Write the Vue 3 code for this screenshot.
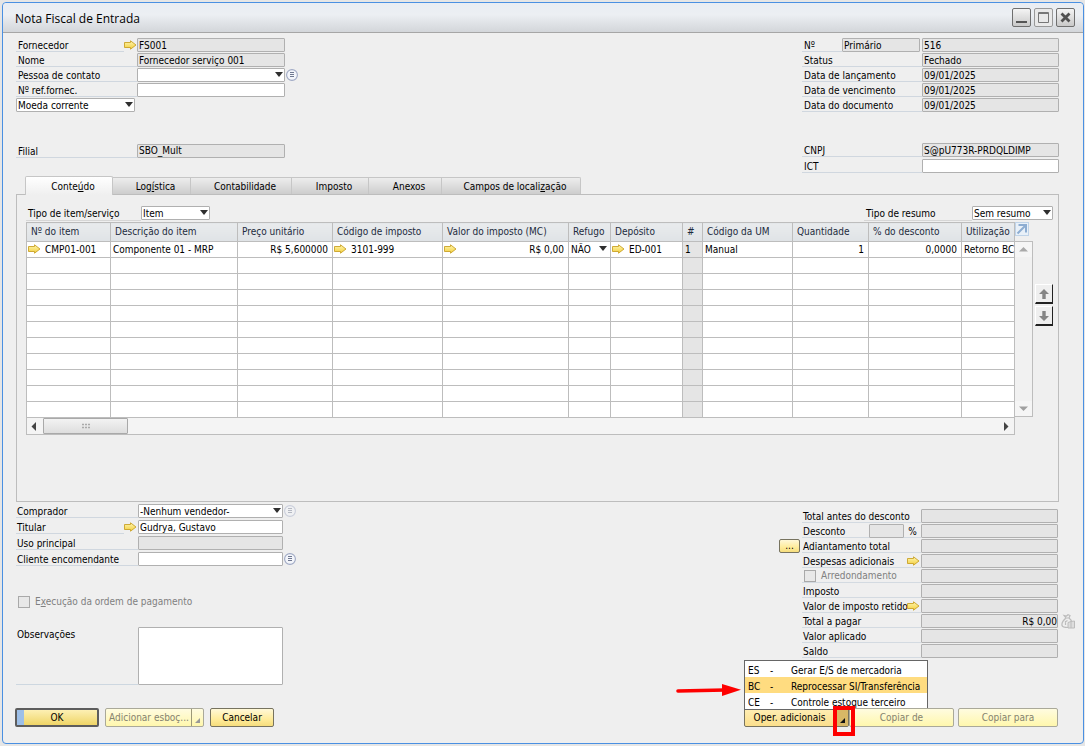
<script setup>
import { ref } from 'vue'

const tabs = [
  { before: 'Conte', key: 'ú', after: 'do', width: 'w-content' },
  { before: 'Log', key: 'í', after: 'stica', width: 'w-logistics' },
  { before: 'Contabilidade', key: '', after: '', width: 'w-accounting' },
  { before: 'Imposto', key: '', after: '', width: 'w-tax' },
  { before: 'Anexos', key: '', after: '', width: 'w-files' },
  { before: 'Campos de locali', key: 'z', after: 'ação', width: 'w-fields' },
]
const activeTab = ref(0)

const dates = [
  { id: 'status', label: 'Status', value: 'Fechado' },
  { id: 'posting', label: 'Data de lançamento', value: '09/01/2025' },
  { id: 'due', label: 'Data de vencimento', value: '09/01/2025' },
  { id: 'document', label: 'Data do documento', value: '09/01/2025' },
]

const columns = [
  { title: 'Nº do item', cls: 'c-item' },
  { title: 'Descrição do item', cls: 'c-desc' },
  { title: 'Preço unitário', cls: 'c-price' },
  { title: 'Código de imposto', cls: 'c-code' },
  { title: 'Valor do imposto (MC)', cls: 'c-value' },
  { title: 'Refugo', cls: 'c-scrap' },
  { title: 'Depósito', cls: 'c-store' },
  { title: '#', cls: 'c-num' },
  { title: 'Código da UM', cls: 'c-um' },
  { title: 'Quantidade', cls: 'c-qty' },
  { title: '% do desconto', cls: 'c-disc' },
  { title: 'Utilização', cls: 'c-use' },
]
const item = [
  { text: 'CMP01-001', arrow: true },
  { text: 'Componente 01 - MRP' },
  { text: 'R$ 5,600000', right: true },
  { text: '3101-999', arrow: true },
  { text: 'R$ 0,00', arrow: true, right: true },
  { text: 'NÃO', drop: true },
  { text: 'ED-001', arrow: true },
  { text: '1' },
  { text: 'Manual' },
  { text: '1', right: true },
  { text: '0,0000', right: true },
  { text: 'Retorno BC' },
]

const totals = [
  { id: 'before', label: 'Total antes do desconto' },
  { id: 'discount', label: 'Desconto', percent: true },
  { id: 'advance', label: 'Adiantamento total', more: true },
  { id: 'freight', label: 'Despesas adicionais', arrow: true },
  { id: 'rounding', label: 'Arredondamento', check: true },
  { id: 'tax', label: 'Imposto' },
  { id: 'withheld', label: 'Valor de imposto retido', arrow: true },
  { id: 'due-total', label: 'Total a pagar', value: 'R$ 0,00', bag: true },
  { id: 'applied', label: 'Valor aplicado' },
  { id: 'balance', label: 'Saldo' },
]

const operations = [
  { code: 'ES', name: 'Gerar E/S de mercadoria' },
  { code: 'BC', name: 'Reprocessar SI/Transferência' },
  { code: 'CE', name: 'Controle estoque terceiro' },
]
const highlighted = ref(1)
</script>

<template>
  <svg class="defs" aria-hidden="true">
    <defs>
      <linearGradient id="gold" x1="0" y1="0" x2="0" y2="1">
        <stop offset="0" stop-color="#fff6b0" />
        <stop offset="1" stop-color="#f3cf3c" />
      </linearGradient>
      <symbol id="link-arrow" viewBox="0 0 13 10">
        <path d="M.5 2.5H6.5V.8L12 5 6.5 9.2V7.5H.5Z" fill="url(#gold)" stroke="#c9a227" stroke-width=".9" stroke-linejoin="round" />
      </symbol>
      <symbol id="list-dot" viewBox="0 0 12 12">
        <circle cx="6" cy="6" r="5.4" fill="#f3f5fa" stroke="#9fa9c4" stroke-width="1.1" />
        <path d="M4 3.5H8M4 5.5H8M4 7.5H8" stroke="#6f7890" />
      </symbol>
    </defs>
  </svg>

  <div class="desktop">
    <section class="window">
      <header class="titlebar">
        <h1>Nota Fiscal de Entrada</h1>
        <div class="controls">
          <button type="button" aria-label="Minimizar"><svg viewBox="0 0 17 17"><path d="M3 13H14" stroke="#555" stroke-width="2" /></svg></button>
          <button type="button" class="light" aria-label="Maximizar"><svg viewBox="0 0 17 17"><path d="M3.500 3.500H13.500V13.500H3.500ZM3 4.500H14" fill="none" stroke="#777" /></svg></button>
          <button type="button" aria-label="Fechar"><svg viewBox="0 0 17 17"><path d="M4.500 4.500L12.500 12.500M12.500 4.500L4.500 12.500" stroke="#505050" stroke-width="2.800" /></svg></button>
        </div>
      </header>

      <main>
        <div class="head">
          <div class="supplier">
            <div class="row">
              <label for="supplier">Fornecedor</label>
              <svg class="arrow"><use href="#link-arrow" /></svg>
              <input id="supplier" class="field ro" value="FS001" readonly />
            </div>
            <div class="row">
              <label for="name">Nome</label>
              <input id="name" class="field ro" value="Fornecedor serviço 001" readonly />
            </div>
            <div class="row">
              <label for="contact">Pessoa de contato</label>
              <span class="drop"><select id="contact"><option></option></select></span>
              <svg class="dot"><use href="#list-dot" /></svg>
            </div>
            <div class="row">
              <label for="ref">Nº ref.fornec.</label>
              <input id="ref" class="field" />
            </div>
            <div class="row">
              <span class="drop currency"><select aria-label="Moeda"><option>Moeda corrente</option></select></span>
            </div>
            <div class="row branch">
              <label for="branch">Filial</label>
              <input id="branch" class="field ro" value="SBO_Mult" readonly />
            </div>
          </div>

          <div class="document">
            <div class="row">
              <label for="number" class="short">Nº</label>
              <input class="field ro series" value="Primário" aria-label="Série" readonly />
              <input id="number" class="field ro" value="516" readonly />
            </div>
            <div v-for="d in dates" :key="d.id" class="row">
              <label :for="d.id">{{ d.label }}</label>
              <input :id="d.id" class="field ro" :value="d.value" readonly />
            </div>
            <div class="row cnpj">
              <label for="cnpj">CNPJ</label>
              <input id="cnpj" class="field ro" value="S@pU773R-PRDQLDIMP" readonly />
            </div>
            <div class="row">
              <label for="ict">ICT</label>
              <input id="ict" class="field" />
            </div>
          </div>
        </div>

        <nav class="tabs">
          <button v-for="(t, i) in tabs" :key="i" type="button" :class="[t.width, { active: i === activeTab }]" @click="activeTab = i">{{ t.before }}<u v-if="t.key">{{ t.key }}</u>{{ t.after }}</button>
        </nav>

        <div class="panel">
          <div class="filters">
            <label for="kind">Tipo de item/serviço</label>
            <span class="drop kind"><select id="kind"><option>Item</option></select></span>
            <span class="spacer"></span>
            <label for="summary">Tipo de resumo</label>
            <span class="drop summary"><select id="summary"><option>Sem resumo</option></select></span>
          </div>

          <div class="matrix">
            <div class="sheet">
              <table>
                <thead>
                  <tr><th v-for="c in columns" :key="c.title" :class="c.cls">{{ c.title }}</th></tr>
                </thead>
                <tbody>
                  <tr>
                    <td v-for="(c, i) in item" :key="i" :class="{ shade: i === 7 }">
                      <div class="cell">
                        <svg v-if="c.arrow" class="arrow"><use href="#link-arrow" /></svg>
                        <span :class="{ right: c.right }">{{ c.text }}</span>
                        <i v-if="c.drop" class="tri"></i>
                      </div>
                    </td>
                  </tr>
                  <tr v-for="r in 10" :key="r">
                    <td v-for="i in 12" :key="i" :class="{ shade: i === 8 }"></td>
                  </tr>
                </tbody>
              </table>
              <div class="hscroll">
                <button type="button" aria-label="Rolar para a esquerda"><svg viewBox="0 0 14 15"><path d="M9 3V12L4.500 7.500Z" fill="#444" /></svg></button>
                <div class="thumb"><svg viewBox="0 0 10 6"><path d="M1 1.500H9M1 4.500H9" stroke="#aaa" stroke-width="1.400" stroke-dasharray="2 1" /></svg></div>
                <button type="button" aria-label="Rolar para a direita"><svg viewBox="0 0 14 15"><path d="M6 3V12L10.500 7.500Z" fill="#444" /></svg></button>
              </div>
            </div>
            <div class="side">
              <button type="button" class="expand" aria-label="Expandir"><svg viewBox="0 0 12 12"><path d="M1.500 10.500L9 3M2.500 2H10V9.500" fill="none" stroke="#8dadd2" stroke-width="2" /></svg></button>
              <div class="vscroll">
                <button type="button" aria-label="Rolar para cima"><svg viewBox="0 0 15 15"><path d="M3 9.500H12L7.500 5Z" fill="#a9a9a9" /></svg></button>
                <button type="button" aria-label="Rolar para baixo"><svg viewBox="0 0 15 15"><path d="M3 5.500H12L7.500 10Z" fill="#a0a0a0" /></svg></button>
              </div>
            </div>
            <div class="movers">
              <button type="button" aria-label="Mover para cima"><svg viewBox="0 0 12 12"><path d="M6 1L11 6H7.700V11H4.300V6H1Z" fill="#858585" /></svg></button>
              <button type="button" aria-label="Mover para baixo"><svg viewBox="0 0 12 12"><path d="M6 11L11 6H7.700V1H4.300V6H1Z" fill="#858585" /></svg></button>
            </div>
          </div>
        </div>

        <div class="foot">
          <div class="people">
            <div class="row">
              <label for="buyer">Comprador</label>
              <span class="drop"><select id="buyer"><option>-Nenhum vendedor-</option></select></span>
              <svg class="dot faded"><use href="#list-dot" /></svg>
            </div>
            <div class="row">
              <label for="owner">Titular</label>
              <svg class="arrow"><use href="#link-arrow" /></svg>
              <input id="owner" class="field" value="Gudrya, Gustavo" />
            </div>
            <div class="row">
              <label for="usage">Uso principal</label>
              <input id="usage" class="field ro" readonly />
            </div>
            <div class="row">
              <label for="client">Cliente encomendante</label>
              <input id="client" class="field" />
              <svg class="dot"><use href="#list-dot" /></svg>
            </div>
            <div class="check payment">
              <input id="payment" type="checkbox" disabled />
              <label for="payment">E<u>x</u>ecução da ordem de pagamento</label>
            </div>
            <div class="remarks">
              <label for="remarks">Observações</label>
              <textarea id="remarks"></textarea>
            </div>
          </div>

          <div class="totals">
            <div v-for="t in totals" :key="t.id" class="total">
              <span><button v-if="t.more" type="button" class="gold more">...</button></span>
              <div v-if="t.check" class="check caption">
                <input :id="'check-' + t.id" type="checkbox" disabled />
                <label :for="'check-' + t.id">{{ t.label }}</label>
              </div>
              <div v-else class="caption">
                <label :for="t.id">{{ t.label }}</label>
                <template v-if="t.percent">
                  <input class="field ro percent" aria-label="Percentual de desconto" readonly />
                  <span class="sign">%</span>
                </template>
                <svg v-if="t.arrow" class="arrow"><use href="#link-arrow" /></svg>
              </div>
              <input :id="t.id" class="field ro amount" :value="t.value" :aria-label="t.label" readonly />
              <svg v-if="t.bag" class="bag" viewBox="0 0 14 15">
                <path d="M5 4C1.500 7 .5 9 1 11.500 1.500 13.500 4 13.500 7 13.500M5 4L3 1.500 5.500 2 7 .7 9 1.500 8 4C10 5.500 10.500 6.500 10.500 8M5 4H8M4.500 7V11M6.500 6.500L4 8" fill="none" stroke="#bcbcbc" stroke-width="1.200" />
                <path d="M7 8.500L10 7.500 13.500 7V14H7ZM10 7.500V14" fill="#ddd" stroke="#bcbcbc" />
              </svg>
            </div>
          </div>
        </div>

        <footer>
          <button type="button" class="gold ok">OK</button>
          <button type="button" class="gold draft" disabled>Adicionar esboç...<i></i></button>
          <button type="button" class="gold cancel">Cancelar</button>
          <span class="spacer"></span>
          <div class="ops">
            <button type="button" class="gold op">Oper. adicionais<i></i></button>
            <ul class="menu">
              <li v-for="(o, i) in operations" :key="o.code">
                <button type="button" :class="{ on: i === highlighted }" @mouseenter="highlighted = i">
                  <span>{{ o.code }}</span><span>-</span><span>{{ o.name }}</span>
                </button>
              </li>
            </ul>
            <span class="marker"></span>
            <svg class="pointer" viewBox="0 0 67 14">
              <path d="M3 8L50 7" stroke="#fe0000" stroke-width="3.600" stroke-linecap="round" />
              <path d="M47 1L66 6.700 47 13Z" fill="#fe0000" />
            </svg>
          </div>
          <button type="button" class="gold copy-from" disabled>Copiar de</button>
          <button type="button" class="gold copy-to" disabled>Copiar para</button>
        </footer>
      </main>
    </section>
  </div>
</template>

<style>
body {
  margin: 0;
  background: #e6e6e6;
}
</style>

<style scoped>
* {
  box-sizing: border-box;
}
.defs {
  position: absolute;
  width: 0;
  height: 0;
}
.desktop {
  min-height: 100vh;
  display: flex;
  padding: 2px 1px 2px 2px;
  font: 10px/12px "DejaVu Sans Condensed", "DejaVu Sans", sans-serif;
  color: #000;
}
.window {
  flex: 1;
  min-width: 0;
  border: 1px solid #4a90e2;
  border-radius: 4px;
  background: #efefef;
}
button,
input,
select,
textarea {
  font: inherit;
  color: inherit;
  margin: 0;
  padding: 0;
  border: 0;
  border-radius: 0;
  background: none;
}
svg {
  display: block;
  flex: none;
}
.titlebar {
  height: 30px;
  display: flex;
  align-items: center;
  justify-content: space-between;
  padding: 0 8px 0 12px;
  border-bottom: 1px solid #a6a6a6;
  border-radius: 4px 4px 0 0;
  background: linear-gradient(#e9edf3, #eceff3 40%, #d3d6da);
}
h1 {
  margin: 2px 0 0;
  font: 12px/16px "Open Sans", "Noto Sans", sans-serif;
}
.controls {
  display: flex;
  gap: 3px;
}
.controls button {
  width: 19px;
  height: 19px;
  border: 1px solid #6f6f6f;
  border-radius: 2px;
  background: linear-gradient(#f4f4f4, #c9c9c9);
}
.controls .light {
  border-color: #999;
  background: #e9e9e9;
}
.controls svg {
  width: 17px;
  height: 17px;
}
main {
  padding: 5px 24px 16px 13px;
}
.head,
.foot {
  display: flex;
  justify-content: space-between;
}
.supplier {
  width: 283px;
}
.document {
  width: 257px;
}
.row {
  display: flex;
  align-items: flex-start;
  height: 15px;
}
label {
  white-space: nowrap;
}
.row > label {
  flex: 1;
  height: 14px;
  padding: 2px 0 0 2px;
  border-bottom: 1px solid #d0d7df;
}
.field,
.drop select,
textarea {
  border: 1px solid #b0b0b0;
  border-radius: 1px;
  background: #fff;
}
.field {
  width: 148px;
  height: 14px;
  padding: 0 1px;
}
.field.ro {
  background: #e5e5e5;
}
.document .field {
  width: 137px;
}
.document .short {
  flex: none;
  width: 40px;
}
.document .series {
  width: 78px;
  margin-right: 2px;
}
.arrow {
  width: 13px;
  height: 10px;
  margin: 2px 1px 0 0;
}
.supplier .arrow {
  margin-right: 0;
}
.supplier .row {
  width: 269px;
}
.dot {
  width: 12px;
  height: 12px;
  margin: 1px -13px 0 1px;
}
.faded {
  opacity: 0.45;
}
.drop {
  position: relative;
  display: block;
  width: 148px;
}
.drop select {
  display: block;
  appearance: none;
  width: 100%;
  height: 14px;
  padding: 1px 1px 0;
}
.drop::after,
.tri {
  content: "";
  width: 8px;
  height: 5px;
  background: #2f2f2f;
  clip-path: polygon(0 0, 100% 0, 50% 100%);
}
.drop::after {
  position: absolute;
  top: 4px;
  right: 2px;
  pointer-events: none;
}
.currency {
  width: 119px;
}
.branch {
  margin-top: 31px;
}
.branch .field {
  line-height: 14px;
}
.cnpj {
  margin: 30px 0 1px;
}
.tabs {
  display: flex;
  align-items: flex-end;
  height: 18px;
  margin: 2px 0 0 9px;
}
.tabs button {
  height: 17px;
  padding: 1px 0 0 8px;
  border: 1px solid #c6c6c6;
  border-width: 1px 1px 0 0;
  background: linear-gradient(#ededed, #cdcdcd);
}
.tabs button:last-child {
  border-radius: 0 2px 0 0;
}
.tabs .active {
  position: relative;
  height: 19px;
  margin-bottom: -1px;
  border-left-width: 1px;
  border-radius: 2px 2px 0 0;
  background: linear-gradient(#fff, #efefef);
}
.w-content { width: 88px; }
.w-logistics { width: 78px; }
.w-accounting { width: 101px; }
.w-tax { width: 77px; }
.w-files { width: 73px; }
.w-fields { width: 139px; }
.panel {
  height: 308px;
  padding: 11px 5px 0 9px;
  border: 1px solid #bdbdbd;
}
.spacer {
  flex: 1;
}
.filters {
  display: flex;
  height: 16px;
}
.filters label {
  width: 115px;
  height: 15px;
  padding: 2px 0 0 2px;
  border-bottom: 1px solid #d6d6d6;
}
.filters label[for="summary"] {
  width: 108px;
}
.kind {
  width: 69px;
}
.summary {
  width: 81px;
}
.matrix {
  display: flex;
}
.sheet {
  flex: 1;
  min-width: 0;
}
table {
  width: 100%;
  table-layout: fixed;
  border-collapse: collapse;
}
th {
  height: 19px;
  padding: 0 0 1px 4px;
  text-align: left;
  font-weight: 400;
  color: #1d2b3d;
  white-space: nowrap;
  overflow: hidden;
  border: 1px solid #bdbdbd;
  background: linear-gradient(#e9ebed, #dfe3e6);
}
td {
  height: 16px;
  padding: 0;
  border: 1px solid #bdbdbd;
  background: #fff;
  overflow: hidden;
}
td.shade {
  background: #e5e5e5;
}
.cell {
  display: flex;
  height: 15px;
  padding: 2px 3px 0 2px;
  white-space: nowrap;
}
.cell .arrow {
  margin: 0 4px 0 -1px;
}
.cell .right {
  margin: 0 1px 0 auto;
}
.cell .tri {
  margin: 2px 0 0 auto;
  flex: none;
}
.c-item { width: 84px; }
.c-desc { width: 127px; }
.c-price { width: 95px; }
.c-code { width: 110px; }
.c-value { width: 126px; }
.c-scrap { width: 42px; }
.c-store { width: 72px; }
.c-num { width: 20px; }
.c-um { width: 90px; }
.c-qty { width: 76px; }
.c-disc { width: 93px; }
.hscroll {
  display: flex;
  height: 17px;
  border: 1px solid #bdbdbd;
  border-top: 0;
  background: #f4f4f4;
}
.hscroll button {
  width: 16px;
}
.hscroll svg {
  width: 14px;
  height: 15px;
}
.hscroll button:last-child {
  margin-left: auto;
}
.hscroll .thumb {
  display: grid;
  place-items: center;
  width: 85px;
  border: 1px solid #a9a9a9;
  border-radius: 1px;
  background: linear-gradient(#f3f3f3, #dedede);
}
.hscroll .thumb svg {
  width: 10px;
  height: 6px;
}
.side {
  width: 18px;
}
.expand {
  display: block;
  width: 14px;
  height: 14px;
  margin-bottom: 5px;
  border: 1px solid #bfd3e8;
  background: #e8f0f8;
}
.expand svg {
  width: 12px;
  height: 12px;
}
.vscroll {
  display: flex;
  flex-direction: column;
  justify-content: space-between;
  height: 176px;
  border: 1px solid #bdbdbd;
  border-left: 0;
  background: #f1f1f1;
}
.vscroll button {
  height: 15px;
  background: #f5f5f5;
}
.vscroll svg {
  width: 15px;
  height: 15px;
  margin-left: 1px;
}
.movers {
  display: flex;
  flex-direction: column;
  gap: 2px;
  margin: 62px 0 0 2px;
}
.movers button {
  display: grid;
  place-items: center;
  width: 18px;
  height: 20px;
  border: 1px solid #fff;
  border-right-color: #222;
  border-bottom: 2px solid #222;
}
.movers svg {
  width: 12px;
  height: 12px;
}
.people {
  width: 267px;
  padding-top: 2px;
}
.people .row {
  height: 16px;
}
.people .row > label {
  padding-left: 1px;
}
.people .drop,
.people .field {
  width: 145px;
}
.check {
  display: flex;
  align-items: center;
  color: #808080;
}
.check input {
  appearance: none;
  flex: none;
  width: 12px;
  height: 12px;
  border: 1px solid #a9a9a9;
  background: #e8e8e8;
}
.check label {
  padding: 1px 0 0 5px;
}
.payment {
  height: 13px;
  margin: 27px 0 19px 2px;
}
.remarks {
  display: flex;
  height: 58px;
}
.remarks label {
  flex: 1;
  padding: 2px 0 0 1px;
  border-bottom: 1px solid #cdd7e0;
}
textarea {
  width: 145px;
  height: 58px;
  resize: none;
}
.totals {
  margin: 7px -17px 0 0;
}
.total {
  display: grid;
  grid-template-columns: 23px 119px 137px 18px;
  height: 15px;
}
.caption {
  display: flex;
  height: 14px;
  padding-left: 1px;
  border-bottom: 1px solid #d3dae1;
}
.caption > label {
  flex: 1;
  min-width: 0;
  padding-top: 2px;
}
.caption.check label {
  padding: 1px 0 0 5px;
}
.caption.check input {
  margin-left: 1px;
}
.percent {
  width: 35px;
}
.sign {
  width: 17px;
  padding-top: 2px;
  text-align: center;
}
.amount {
  width: 137px;
  text-align: right;
  padding: 0;
}
.bag {
  width: 14px;
  height: 15px;
  margin-left: 3px;
}
.gold {
  position: relative;
  height: 19px;
  border: 1px solid #77735f;
  border-radius: 2px;
  background: linear-gradient(#fff8d8, #ffec9b 60%, #f6dd7d);
}
.gold:disabled {
  color: #85836f;
  border-color: #aaa999;
  background: linear-gradient(#fffce0, #fff7ad);
}
.more {
  display: block;
  width: 21px;
  height: 14px;
  line-height: 10px;
}
footer {
  display: flex;
  margin: 23px 1px 0 -1px;
}
.ok {
  width: 84px;
  border: 2px solid #5d5d5d;
  background: linear-gradient(90deg, #9dbfe8 7px, transparent 7px), linear-gradient(#fdf0b4, #efd567);
}
.draft {
  width: 99px;
  margin: 0 6px;
  padding-left: 3px;
  text-align: left;
}
.cancel {
  width: 64px;
}
.gold i {
  position: absolute;
  inset: 0 0 0 auto;
  width: 12px;
  border-left: 1px solid #9c9978;
}
.gold i::after {
  content: "";
  position: absolute;
  right: 3px;
  bottom: 3px;
  width: 5px;
  height: 5px;
  background: #999;
  clip-path: polygon(100% 0, 100% 100%, 0 100%);
}
.ops {
  position: relative;
}
.op {
  width: 105px;
  padding-right: 14px;
  background: linear-gradient(#ffeeb4, #fbdf8c);
}
.op i {
  width: 14px;
  background: #d8b866;
}
.op i::after {
  background: #111;
}
.copy-from {
  width: 105px;
  margin-right: 4px;
}
.copy-to {
  width: 100px;
}
.menu {
  position: absolute;
  left: 0;
  bottom: 17px;
  width: 184px;
  margin: 0;
  padding: 0;
  list-style: none;
  border: 1px solid #666;
  background: #fff;
}
.menu button {
  display: grid;
  grid-template-columns: 22px 21px 1fr;
  align-content: end;
  width: 100%;
  height: 16px;
  padding: 3px 0 0 3px;
  text-align: left;
  white-space: nowrap;
}
.menu .on {
  background: #ffdc80;
}
.marker {
  position: absolute;
  top: -2px;
  left: 89px;
  width: 22px;
  height: 30px;
  z-index: 1;
  border: 4px solid #fe0000;
}
.pointer {
  position: absolute;
  left: -69px;
  top: -25px;
  width: 67px;
  height: 14px;
}
</style>
